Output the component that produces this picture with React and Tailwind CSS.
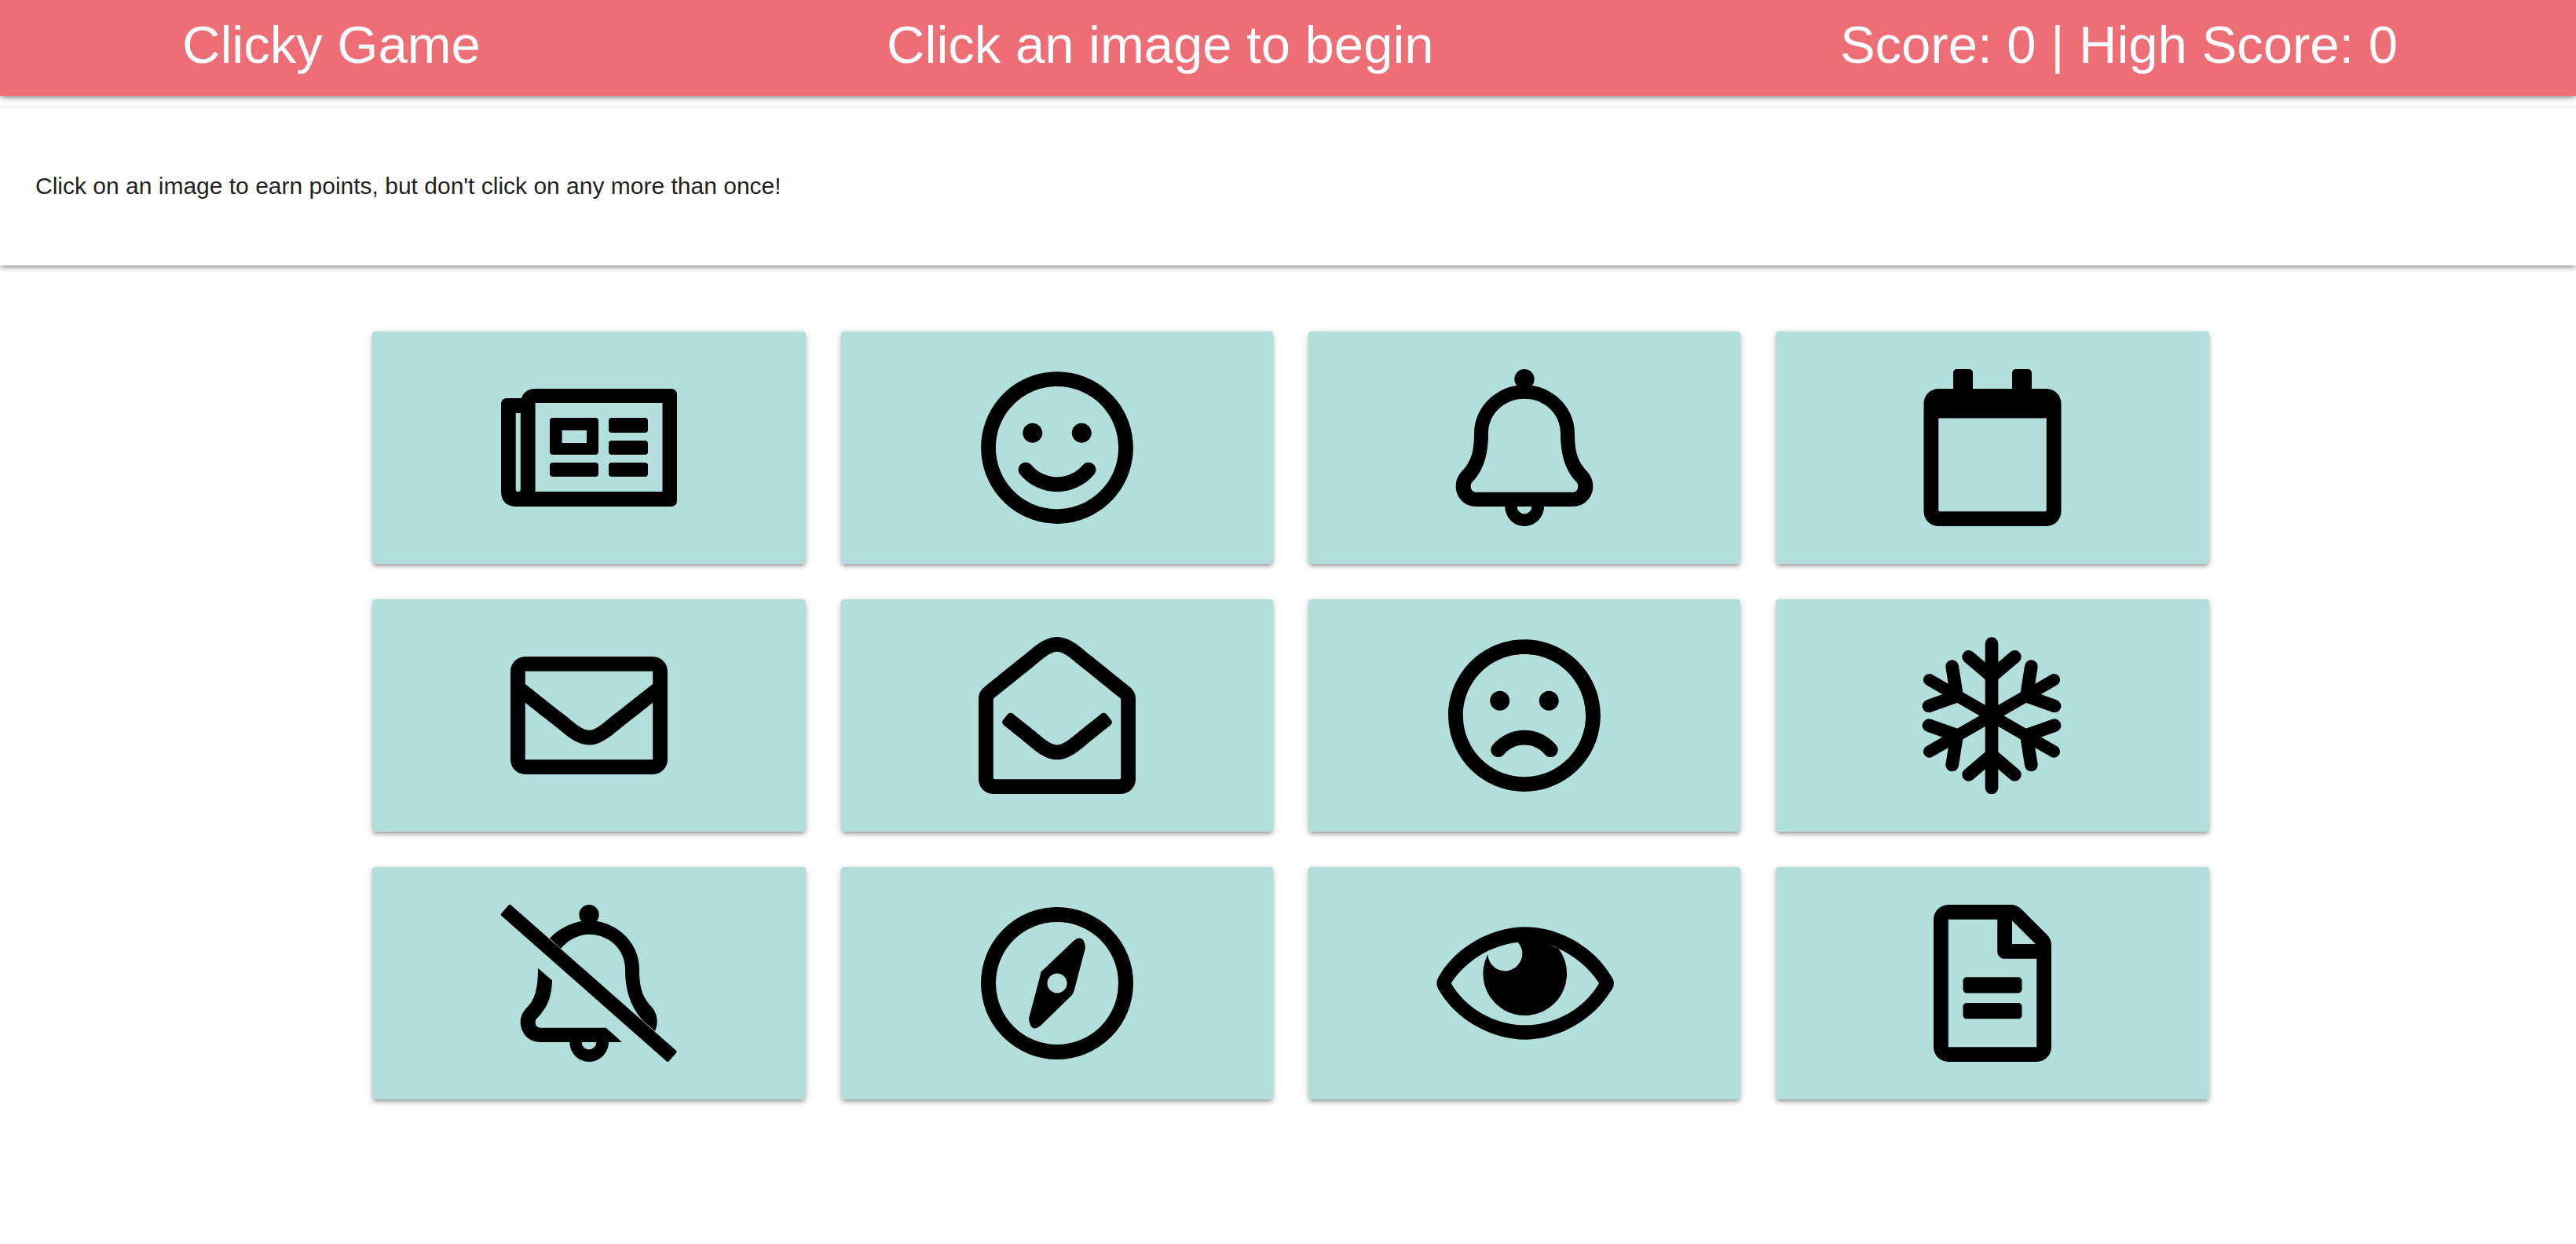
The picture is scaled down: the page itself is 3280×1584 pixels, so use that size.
import {
  FaRegSmile,
  FaRegCalendar,
  FaRegEnvelope,
  FaRegEnvelopeOpen,
  FaRegFrown,
  FaRegFileAlt,
} from 'react-icons/fa';

// The older regular set draws these differently from react-icons, so they are drawn here.
function NewspaperIcon() {
  return (
    <svg viewBox="638 495 224 150" className="h-[150px] w-[224px]" fill="currentColor" fillRule="evenodd">
      <path d="M682 495L854 495Q862 495 862 503L862 637Q862 645 854 645L658 645Q638 645 638 625L638 515Q638 507 646 507L664 507Q668 495 682 495ZM681.6 513V626H843.5V513ZM656.7 526V623Q656.7 626 659.8 626Q662.8 626 662.8 623V526Z" />
      <path d="M704 532H758Q762 532 762 536V575Q762 579 758 579H704Q700 579 700 575V536Q700 532 704 532ZM715.6 548V564H747V548Z" />
      <rect x="775" y="532" width="50" height="19" rx="4" />
      <rect x="775" y="561" width="50" height="18" rx="4" />
      <rect x="775" y="589" width="50" height="18" rx="4" />
      <rect x="700" y="589" width="62" height="18" rx="4" />
    </svg>
  );
}

function BellIcon() {
  return (
    <svg viewBox="0 5 780 720" className="h-[240px] w-[260px]" fill="currentColor" fillRule="evenodd">
      <circle cx="390" cy="103" r="38" />
      <path d="M390 125C490 125 582 205 582 310C582 370 590 410 620 445C640 465 652 485 652 512C652 555 620 590 575 590L465 590C465 630 432 665 390 665C348 665 316 630 316 590L205 590C160 590 128 555 128 512C128 485 140 465 160 445C190 410 198 370 198 310C198 205 290 125 390 125ZM390 178C315 178 252 235 252 310C252 390 235 450 190 498C180 510 185 535 205 535L575 535C595 535 600 510 590 498C545 450 528 390 528 310C528 235 465 178 390 178ZM362 590A28 28 0 0 0 418 590Z" />
    </svg>
  );
}

function BellSlashIcon() {
  return (
    <svg viewBox="0 5 780 720" className="h-[240px] w-[260px]" fill="currentColor" fillRule="evenodd">
      <circle cx="390" cy="103" r="38" />
      <path d="M87.5 71.6L60.5 102.4L690.5 657.4L717.5 626.6Z" stroke="currentColor" strokeWidth="14" strokeLinejoin="round" />
      <path d="M240 193C280 150 340 125 390 125C490 125 582 205 582 310C582 370 590 410 620 445C640 465 650 485 650 510C650 525 647 538 642 548L595 507C540 445 528 375 528 310C528 235 465 178 390 178C350 178 310 200 282 232Z" />
      <path d="M195 307L249 354C248 410 235 455 190 500C180 512 185 535 205 535L455 535L516 590L465 590C465 630 432 665 390 665C348 665 316 630 316 590L205 590C150 590 128 545 128 512C128 490 140 470 155 455C185 425 195 380 195 307ZM362 590A28 28 0 0 0 418 590Z" />
    </svg>
  );
}

function SnowflakeIcon() {
  return (
    <svg viewBox="-9 -2 720 675" className="h-[225px] w-[240px]" fill="none" stroke="currentColor" strokeWidth="50" strokeLinecap="round">
      <path d="M348 60V610" />
      <path d="M110 198L586 472M586 198L110 472" strokeWidth="46" />
      <path d="M260 110L348 185L436 110M260 560L348 485L436 560" />
      <path d="M197 147L215 260L108 298M499 147L481 260L588 298M197 523L215 410L108 372M499 523L481 410L588 372" />
    </svg>
  );
}

function CompassIcon() {
  return (
    <svg viewBox="-100 -100 200 200" className="h-[200px] w-[200px]" fill="currentColor" fillRule="evenodd">
      <circle r="87.5" fill="none" stroke="currentColor" strokeWidth="19" />
      <path d="M-21 -14L21 -54Q34 -64 36 -45L22 8Q21 12 19 15L-21 54Q-34 64 -36 45L-22 -8Q-21 -11 -21 -14ZM-12.5 0a12.5 12.5 0 1 0 25 0a12.5 12.5 0 1 0 -25 0Z" />
    </svg>
  );
}

function EyeIcon() {
  return (
    <svg viewBox="0 5 780 540" className="h-[180px] w-[260px]" fill="currentColor" fillRule="evenodd">
      <path d="M55 275C55 262 62 250 70 238C130 140 260 60 393 60C525 60 655 140 715 238C725 252 732 262 732 275C732 288 725 300 715 312C655 410 525 490 393 490C260 490 130 410 70 312C62 300 55 288 55 275ZM110 275C165 370 275 435 393 435C510 435 620 370 675 275C640 220 590 175 520 142C470 118 420 112 365 118C260 130 165 190 110 275Z" />
      <path d="M365 118A66 66 0 1 1 250 165A160 160 0 1 0 520 142L393 90Z" />
    </svg>
  );
}

const ICONS = [
  { key: 'newspaper', icon: <NewspaperIcon /> },
  { key: 'smile', icon: <FaRegSmile className="h-[200px] w-[200px]" /> },
  { key: 'bell', icon: <BellIcon /> },
  { key: 'calendar', icon: <FaRegCalendar className="h-[200px] w-[200px]" /> },
  { key: 'envelope', icon: <FaRegEnvelope className="h-[200px] w-[200px]" /> },
  { key: 'envelope-open', icon: <FaRegEnvelopeOpen className="h-[200px] w-[200px]" /> },
  { key: 'frown', icon: <FaRegFrown className="h-[200px] w-[200px]" /> },
  { key: 'snowflake', icon: <SnowflakeIcon /> },
  { key: 'bell-slash', icon: <BellSlashIcon /> },
  { key: 'compass', icon: <CompassIcon /> },
  { key: 'eye', icon: <EyeIcon /> },
  { key: 'file', icon: <FaRegFileAlt className="h-[200px] w-[200px]" /> },
];

const DEPTH = 'shadow-[0_4px_4px_0_rgba(0,0,0,0.14),0_6px_2px_-4px_rgba(0,0,0,0.12),0_2px_10px_0_rgba(0,0,0,0.2)]';

export default function App() {
  return (
    <div className="min-h-[1584px] bg-white font-['Liberation_Sans',Arial,sans-serif]">
      <nav className={`flex h-[122px] items-center justify-between bg-[#ed6f75] pb-2 pl-[232px] pr-[227px] text-[67px] text-white ${DEPTH}`}>
        <span>Clicky Game</span>
        <span>Click an image to begin</span>
        <span>Score: 0 | High Score: 0</span>
      </nav>

      <header className={`mt-4 flex h-[200px] items-center bg-white pb-1 pl-[45px] ${DEPTH}`}>
        <p className="text-[30px] text-black/90">Click on an image to earn points, but don't click on any more than once!</p>
      </header>

      <main className="ml-[474px] mt-[84px] grid w-[2339px] grid-cols-[552px_550px_550px_552px] auto-rows-[296px] gap-x-[45px] gap-y-[45px]">
        {ICONS.map(({ key, icon }) => (
          <button key={key} type="button" className={`flex items-center justify-center rounded bg-[#b2dfdb] text-black ${DEPTH}`}>
            {icon}
          </button>
        ))}
      </main>
    </div>
  );
}
